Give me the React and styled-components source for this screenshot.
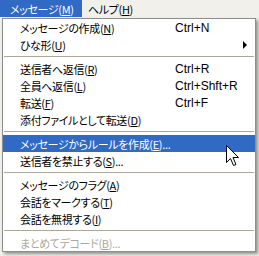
import React from "react";
import styled, { createGlobalStyle } from "styled-components";

const GlobalStyle = createGlobalStyle`
  body {
    margin: 0;
    background: #f1f0ea;
  }
`;

const Screen = styled.div`
  position: relative;
  width: 259px;
  height: 256px;
  overflow: hidden;
  font-family: "Noto Sans CJK JP", "Liberation Sans", sans-serif;
  font-feature-settings: "palt";
  font-size: 11px;
  letter-spacing: -0.35px;
  color: #000;
`;

const MenuBar = styled.div`
  display: flex;
  height: 18px;
  background: #f1f0ea;
`;

const BarItem = styled.div`
  display: flex;
  align-items: center;
  height: 17px;
  padding: ${(p) => (p.$active ? "0 0 0 10px" : "0 0 0 6px")};
  width: ${(p) => (p.$active ? "72px" : "auto")};
  background: ${(p) => (p.$active ? "#316ac5" : "transparent")};
  color: ${(p) => (p.$active ? "#fff" : "#000")};
`;

const Dropdown = styled.div`
  margin-left: 2px;
  width: 254px;
  box-sizing: border-box;
  border: 1px solid #8e8e8e;
  background: #fff;
  box-shadow: 2px 2px 3px rgba(0, 0, 0, 0.4);
`;

const Item = styled.div`
  display: grid;
  grid-template-columns: 155px 1fr 12px;
  align-items: center;
  height: 17px;
  padding-left: 17px;
  background: ${(p) => (p.$active ? "#316ac5" : "transparent")};
  color: ${(p) => (p.$active ? "#fff" : p.$disabled ? "#aca899" : "#000")};
`;

const Label = styled.span`
  white-space: nowrap;
`;

const Shortcut = styled.span`
  font-family: "Liberation Sans", sans-serif;
  font-size: 12px;
  letter-spacing: 0;
  white-space: nowrap;
`;

const Arrow = styled.span`
  width: 0;
  height: 0;
  border-left: 4px solid #000;
  border-top: 4px solid transparent;
  border-bottom: 4px solid transparent;
`;

const Separator = styled.div`
  height: 7px;
  display: flex;
  align-items: center;
  padding: 0 1px;
  &::after {
    content: "";
    flex: 1;
    height: 1px;
    background: #aca899;
  }
`;

const Cursor = styled.svg`
  position: absolute;
  left: 226px;
  top: 145px;
`;

const items = [
  { label: "メッセージの作成", key: "N", shortcut: "Ctrl+N" },
  { label: "ひな形", key: "U", submenu: true },
  { sep: true },
  { label: "送信者へ返信", key: "R", shortcut: "Ctrl+R" },
  { label: "全員へ返信", key: "L", shortcut: "Ctrl+Shft+R" },
  { label: "転送", key: "F", shortcut: "Ctrl+F" },
  { label: "添付ファイルとして転送", key: "D" },
  { sep: true },
  { label: "メッセージからルールを作成", key: "E", dots: true, active: true },
  { label: "送信者を禁止する", key: "S", dots: true },
  { sep: true },
  { label: "メッセージのフラグ", key: "A" },
  { label: "会話をマークする", key: "T" },
  { label: "会話を無視する", key: "I" },
  { sep: true },
  { label: "まとめてデコード", key: "B", dots: true, disabled: true },
];

const App = () => (
  <Screen>
    <GlobalStyle />
    <MenuBar>
      <BarItem $active>
        メッセージ(<u>M</u>)
      </BarItem>
      <BarItem>
        ヘルプ(<u>H</u>)
      </BarItem>
    </MenuBar>
    <Dropdown>
      {items.map((it, i) =>
        it.sep ? (
          <Separator key={i} />
        ) : (
          <Item key={i} $active={it.active} $disabled={it.disabled}>
            <Label>
              {it.label}(<u>{it.key}</u>){it.dots ? "..." : ""}
            </Label>
            <Shortcut>{it.shortcut}</Shortcut>
            {it.submenu ? <Arrow /> : <span />}
          </Item>
        )
      )}
    </Dropdown>
    <Cursor width="13" height="22" viewBox="0 0 13 22">
      <path
        d="M0.5 0.5 L0.5 17.5 L4.5 13.5 L7.5 20.5 L10 19.5 L7 12.5 L12.5 12.5 Z"
        fill="#fff"
        stroke="#000"
        strokeWidth="1"
        strokeLinejoin="miter"
      />
    </Cursor>
  </Screen>
);

export default App;
